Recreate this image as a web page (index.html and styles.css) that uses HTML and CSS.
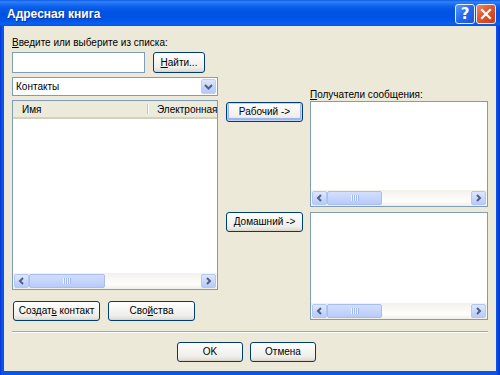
FILE: index.html
```html
<!DOCTYPE html>
<html lang="ru">
<head>
<meta charset="utf-8">
<title>Адресная книга</title>
<link rel="stylesheet" href="styles.css">
</head>
<body>
<div class="window">
  <div class="titlebar">
    <span class="title">Адресная книга</span>
    <div class="caption-buttons">
      <span class="cbtn help">?</span>
      <span class="cbtn close"><svg width="12" height="12" viewBox="0 0 12 12"><path d="M2 2 L10 10 M10 2 L2 10" stroke="#fff" stroke-width="2.2" stroke-linecap="square"/></svg></span>
    </div>
  </div>
  <div class="body">
    <div class="main">
      <div class="col-left">
        <div class="label"><u>В</u>ведите или выберите из списка:</div>
        <div class="search-row">
          <div class="textbox"></div>
          <button class="btn btn-find"><u>Н</u>айти...</button>
        </div>
        <div class="combo">
          <span class="combo-text">Контакты</span>
          <span class="combo-arrow"><svg width="9" height="7" viewBox="0 0 9 7"><path d="M1 2 L4.5 5.5 L8 2" fill="none" stroke="#4D6185" stroke-width="2"/></svg></span>
        </div>
        <div class="listview lv-contacts">
          <div class="lv-header">
            <div class="lv-col lv-name">Имя</div>
            <div class="lv-col lv-email">Электронная</div>
          </div>
          <div class="lv-body"></div>
          <div class="hscroll">
            <span class="sb-btn"><svg width="7" height="8" viewBox="0 0 7 8"><path d="M5 1 L2 4 L5 7" fill="none" stroke="#4D6185" stroke-width="2"/></svg></span>
            <span class="sb-track"><span class="sb-thumb thumb-wide"><i class="grip"></i></span></span>
            <span class="sb-btn"><svg width="7" height="8" viewBox="0 0 7 8"><path d="M2 1 L5 4 L2 7" fill="none" stroke="#4D6185" stroke-width="2"/></svg></span>
          </div>
        </div>
        <div class="btn-row">
          <button class="btn btn-wide">Создат<u>ь</u> контакт</button>
          <button class="btn btn-wide">Сво<u>й</u>ства</button>
        </div>
      </div>
      <div class="col-mid">
        <button class="btn btn-move btn-default">Рабочий -&gt;</button>
        <button class="btn btn-move btn-home">Домашний -&gt;</button>
      </div>
      <div class="col-right">
        <div class="label"><u>П</u>олучатели сообщения:</div>
        <div class="listview lv-work">
          <div class="lv-body"></div>
          <div class="hscroll">
            <span class="sb-btn"><svg width="7" height="8" viewBox="0 0 7 8"><path d="M5 1 L2 4 L5 7" fill="none" stroke="#4D6185" stroke-width="2"/></svg></span>
            <span class="sb-track"><span class="sb-thumb thumb-narrow"><i class="grip"></i></span></span>
            <span class="sb-btn"><svg width="7" height="8" viewBox="0 0 7 8"><path d="M2 1 L5 4 L2 7" fill="none" stroke="#4D6185" stroke-width="2"/></svg></span>
          </div>
        </div>
        <div class="listview lv-home">
          <div class="lv-body"></div>
          <div class="hscroll">
            <span class="sb-btn"><svg width="7" height="8" viewBox="0 0 7 8"><path d="M5 1 L2 4 L5 7" fill="none" stroke="#4D6185" stroke-width="2"/></svg></span>
            <span class="sb-track"><span class="sb-thumb thumb-narrow"><i class="grip"></i></span></span>
            <span class="sb-btn"><svg width="7" height="8" viewBox="0 0 7 8"><path d="M2 1 L5 4 L2 7" fill="none" stroke="#4D6185" stroke-width="2"/></svg></span>
          </div>
        </div>
      </div>
    </div>
    <div class="separator"></div>
    <div class="footer">
      <button class="btn btn-footer">OK</button>
      <button class="btn btn-footer">Отмена</button>
    </div>
  </div>
</div>
</body>
</html>
```
FILE: styles.css
```css
html, body {
  margin: 0;
  padding: 0;
  background: #ECE9D8;
}
body {
  font-family: "Liberation Sans", Tahoma, Arial, sans-serif;
  font-size: 10px;
  color: #000;
}
.window {
  width: 500px;
  height: 375px;
  box-sizing: border-box;
  display: flex;
  flex-direction: column;
  background: linear-gradient(to right, #0831D9 0, #0A55E8 2px, #0A55E8 496px, #0831D9 500px);
}
.titlebar {
  height: 26px;
  flex: none;
  display: flex;
  align-items: flex-start;
  padding: 0 4px 0 7px;
  background: linear-gradient(to bottom, #0A5FEA 0px, #3482F5 2px, #1D6FF2 4px, #0A5EEA 7px, #0055E5 11px, #0053E2 17px, #0058EA 21px, #0862F2 24px, #0650DE 26px);
}
.title {
  flex: 1;
  color: #fff;
  font-weight: bold;
  font-size: 12px;
  line-height: 16px;
  margin-top: 6px;
  text-shadow: 1px 1px 0 #0A2C99;
}
.caption-buttons {
  display: flex;
  gap: 1px;
  margin-top: 4px;
}
.cbtn {
  width: 20px;
  height: 20px;
  box-sizing: border-box;
  border: 1px solid #E8EEFC;
  border-radius: 3px;
  display: flex;
  align-items: center;
  justify-content: center;
}
.help {
  background: linear-gradient(135deg, #5A9BFB 0%, #2468EC 50%, #1B55D8 100%);
  color: #fff;
  font-weight: bold;
  font-size: 15px;
  font-family: "DejaVu Sans", sans-serif;
}
.close {
  background: linear-gradient(135deg, #ED8A66 0%, #E0562C 45%, #C53E15 100%);
}
.body {
  flex: 1;
  margin: 0 4px 4px 4px;
  padding: 0 8px;
  background: #ECE9D8;
  display: flex;
  flex-direction: column;
}
.main {
  display: flex;
}
.label {
  line-height: 13px;
  height: 13px;
  white-space: nowrap;
}
.col-left {
  width: 206px;
  padding-top: 10px;
  display: flex;
  flex-direction: column;
}
.search-row {
  display: flex;
  gap: 8px;
  margin-top: 3px;
  height: 21px;
}
.textbox {
  width: 133px;
  height: 21px;
  box-sizing: border-box;
  border: 1px solid #7F9DB9;
  background: #fff;
}
.btn {
  box-sizing: border-box;
  height: 20px;
  border: 1px solid #003C74;
  border-radius: 3px;
  background: linear-gradient(to bottom, #FFFFFF 0%, #F7F7F4 35%, #EFEEE9 75%, #E3E0D6 92%, #D6D0C5 100%);
  font-family: inherit;
  font-size: 10px;
  color: #000;
  padding: 0;
  line-height: 18px;
  text-align: center;
  white-space: nowrap;
}
.btn-find {
  width: 52px;
  height: 21px;
}
.combo {
  margin-top: 4px;
  height: 19px;
  box-sizing: border-box;
  border: 1px solid #7F9DB9;
  background: #fff;
  display: flex;
  align-items: center;
  padding: 1px;
}
.combo-text {
  flex: 1;
  padding-left: 2px;
}
.combo-arrow {
  width: 15px;
  height: 15px;
  box-sizing: border-box;
  border: 1px solid #BCCEF5;
  border-radius: 2px;
  background: linear-gradient(to bottom, #DCE6FD, #C1D3FB 60%, #B4C9F8);
  display: flex;
  align-items: center;
  justify-content: center;
}
.listview {
  box-sizing: border-box;
  border: 1px solid #7F9DB9;
  background: #fff;
  display: flex;
  flex-direction: column;
}
.lv-contacts {
  margin-top: 4px;
  height: 190px;
}
.lv-header {
  height: 18px;
  flex: none;
  display: flex;
  box-sizing: border-box;
  background: #EBEADB;
  border-bottom: 2px solid #D4D0BF;
  overflow: hidden;
}
.lv-col {
  white-space: nowrap;
}
.lv-name {
  width: 135px;
  flex: none;
  box-sizing: border-box;
  padding-left: 9px;
  border-right: 1px solid #C7C5B2;
  box-shadow: 1px 0 0 #fff;
  margin: 3px 0;
}
.lv-name, .lv-email {
  display: flex;
  align-items: center;
}
.lv-email {
  padding-left: 8px;
  margin-left: 1px;
}
.lv-body {
  flex: 1;
}
.hscroll {
  height: 16px;
  flex: none;
  display: flex;
  align-items: stretch;
  background: linear-gradient(to bottom, #F3F1EC, #FEFEFB 70%, #F0EEE8);
  padding: 1px;
  box-sizing: border-box;
}
.sb-btn {
  width: 15px;
  flex: none;
  box-sizing: border-box;
  border: 1px solid #B3C7F4;
  border-radius: 2px;
  background: linear-gradient(to bottom, #DDE7FE, #C6D6FC 60%, #B7CBF9);
  display: flex;
  align-items: center;
  justify-content: center;
}
.sb-track {
  flex: 1;
  display: flex;
}
.sb-thumb {
  box-sizing: border-box;
  border: 1px solid #A8BDF0;
  border-radius: 2px;
  background: linear-gradient(to bottom, #D2DEFD, #C3D3FC 60%, #B8CAF9);
  display: flex;
  align-items: center;
  justify-content: center;
}
.thumb-wide { width: 76px; }
.thumb-narrow { width: 55px; }
.grip {
  width: 8px;
  height: 6px;
  background: repeating-linear-gradient(to right, #EEF4FE 0, #EEF4FE 1px, #9DB8F2 1px, #9DB8F2 2px);
}
.btn-row {
  display: flex;
  gap: 8px;
  margin-top: 11px;
  padding-left: 1px;
}
.btn-wide {
  width: 87px;
}
.col-mid {
  width: 77px;
  margin-left: 8px;
  padding-top: 76px;
  display: flex;
  flex-direction: column;
}
.btn-default {
  box-shadow: inset 0 0 0 1px #C2D4F6, inset 0 -1px 0 2px #9AB6EC;
}
.btn-home {
  margin-top: 90px;
}
.col-right {
  width: 178px;
  margin-left: 7px;
  padding-top: 62px;
  display: flex;
  flex-direction: column;
}
.lv-work {
  height: 106px;
}
.lv-home {
  margin-top: 5px;
  height: 108px;
}
.separator {
  margin-top: 10px;
  height: 1px;
  background: #ACA899;
  border-bottom: 1px solid #fff;
}
.footer {
  margin-top: 9px;
  display: flex;
  justify-content: center;
  gap: 7px;
  padding-right: 7px;
}
.btn-footer {
  width: 66px;
}
```
